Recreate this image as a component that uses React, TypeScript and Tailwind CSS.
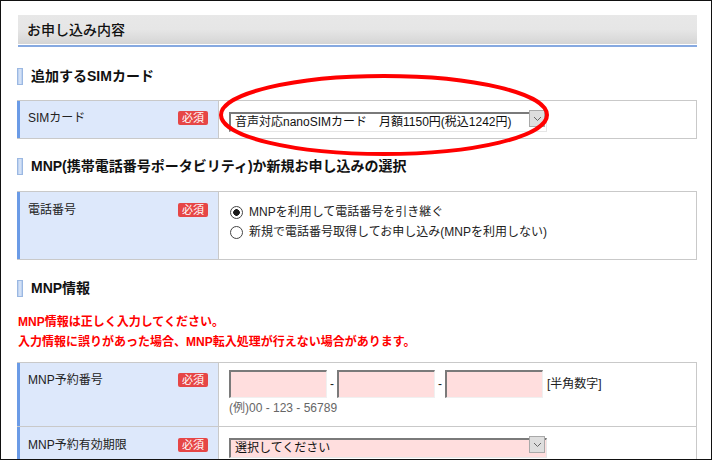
import React from "react";

const font = "font-['Liberation_Sans','Noto_Sans_CJK_JP',sans-serif]";

function Badge() {
    return (
        <span className="w-[30px] h-[14px] rounded-[2px] bg-[#e64646] text-white text-[11px] leading-[14px] text-center">
            必須
        </span>
    );
}

function SectionHeading({ children }: { children: React.ReactNode }) {
    return (
        <div className="flex items-center gap-2 h-[17px]">
            <span className="w-[6px] h-[17px] border border-[#9bb8e2] bg-linear-to-r from-[#b4cbee] via-[#dde8f8] to-[#b4cbee]" />
            <span className="text-[14px] leading-[17px] font-bold text-[#111]">{children}</span>
        </div>
    );
}

function Label({ text, pt }: { text: string; pt: string }) {
    return (
        <div className={`w-[202px] shrink-0 border-l-[3px] border-l-[#6b9be6] border-r border-r-[#c9c9c9] bg-[#dde8fb] pl-[8px] pr-[10px] ${pt}`}>
            <div className="flex h-[20px] items-center justify-between">
                <span className="text-[12px] text-[#222]">{text}</span>
                <Badge />
            </div>
        </div>
    );
}

function FakeSelect({ value, pink }: { value: string; pink?: boolean }) {
    return (
        <div className="relative w-[318px] h-[20px]">
            <select
                defaultValue={value}
                className={`appearance-none w-full h-full border-t-2 border-l-2 border-t-[#7a7a7a] border-l-[#7a7a7a] border-r border-b border-r-[#e6e6e6] border-b-[#e6e6e6] pl-[4px] text-[12px] leading-[16px] text-[#111] outline-none ${pink ? "bg-[#ffdede]" : "bg-white"}`}
            >
                <option>{value}</option>
            </select>
            <span className="absolute right-[2px] top-[1px] flex h-[17px] w-[16px] items-center justify-center border border-[#a9a9a9] bg-[#dedede]">
                <svg width="9" height="6" viewBox="0 0 9 6">
                    <polyline points="1,1 4.5,4.5 8,1" fill="none" stroke="#666" strokeWidth="1" />
                </svg>
            </span>
        </div>
    );
}

function TextBox() {
    return (
        <input
            type="text"
            className="w-[98px] h-[28px] bg-[#ffdede] border-t-2 border-l-2 border-t-[#7a7a7a] border-l-[#7a7a7a] border-r border-b border-r-[#f0f0f0] border-b-[#f0f0f0] outline-none"
        />
    );
}

function Radio({ label, checked }: { label: string; checked?: boolean }) {
    return (
        <label className="flex h-[20px] items-center gap-[6px]">
            <input
                type="radio"
                name="tel"
                defaultChecked={checked}
                className="appearance-none ml-px w-[13px] h-[13px] rounded-full border border-[#444] bg-white checked:bg-[radial-gradient(circle,#1a1a1a_0_3px,#ffffff_3.6px)]"
            />
            <span className="text-[12px] text-[#222]">{label}</span>
        </label>
    );
}

export default function App() {
    return (
        <div className={`relative w-[712px] h-[460px] overflow-hidden border border-[#111] bg-white pl-4 pr-[14px] pt-[14px] ${font}`}>
            {/* page title bar */}
            <div className="ml-px border-b-2 border-[#86a9e1]">
                <div className="flex h-[30px] items-center border-b border-white bg-linear-to-b from-[#e8e8e8] via-[#e6e6e6] to-[#d5d5d5] pl-[9px] pt-[2px]">
                    <span className="text-[14px] font-medium text-[#111]">お申し込み内容</span>
                </div>
            </div>

            <div className="mt-[21px]">
                <SectionHeading>追加するSIMカード</SectionHeading>
            </div>

            <div className="mt-[15px] border-t border-r border-[#c9c9c9]">
                <div className="flex border-b border-[#c9c9c9]">
                    <Label text="SIMカード" pt="pt-[7px]" />
                    <div className="flex-1 pl-[10px] pt-[8px] pb-[9px]">
                        <FakeSelect value="音声対応nanoSIMカード　月額1150円(税込1242円)" />
                    </div>
                </div>
            </div>

            <div className="mt-[19px]">
                <SectionHeading>MNP(携帯電話番号ポータビリティ)か新規お申し込みの選択</SectionHeading>
            </div>

            <div className="mt-[16px] border-t border-r border-[#c9c9c9]">
                <div className="flex border-b border-[#c9c9c9]">
                    <Label text="電話番号" pt="pt-[8px]" />
                    <div className="flex-1 pl-[10px] pt-[10px] pb-[17px]">
                        <Radio label="MNPを利用して電話番号を引き継ぐ" checked />
                        <Radio label="新規で電話番号取得してお申し込み(MNPを利用しない)" />
                    </div>
                </div>
            </div>

            <div className="mt-[20px]">
                <SectionHeading>MNP情報</SectionHeading>
            </div>

            <div className="mt-[15px] ml-px text-[12px] leading-[20px] font-bold text-[#ff0000]">
                <p>MNP情報は正しく入力してください。</p>
                <p>入力情報に誤りがあった場合、MNP転入処理が行えない場合があります。</p>
            </div>

            <div className="mt-[10px] border-t border-r border-[#c9c9c9]">
                <div className="flex border-b border-[#c9c9c9]">
                    <Label text="MNP予約番号" pt="pt-[7px]" />
                    <div className="flex-1 pl-[10px] pt-[7px] pb-[10px]">
                        <div className="flex items-center">
                            <TextBox />
                            <span className="w-[10px] text-center text-[12px] text-[#222]">-</span>
                            <TextBox />
                            <span className="w-[10px] text-center text-[12px] text-[#222]">-</span>
                            <TextBox />
                            <span className="ml-[4px] text-[12px] text-[#222]">[半角数字]</span>
                        </div>
                        <p className="mt-[2px] text-[12px] leading-[16px] text-[#666]">(例)00 - 123 - 56789</p>
                    </div>
                </div>
                <div className="flex border-b border-[#c9c9c9]">
                    <Label text="MNP予約有効期限" pt="pt-[8px]" />
                    <div className="flex-1 pl-[10px] pt-[8px] pb-[10px]">
                        <FakeSelect value="選択してください" pink />
                    </div>
                </div>
            </div>

            {/* red hand-drawn highlight */}
            <svg className="pointer-events-none absolute left-0 top-0" width="712" height="460">
                <ellipse cx="383" cy="114" rx="163" ry="39" fill="none" stroke="#ff0000" strokeWidth="4" />
            </svg>
        </div>
    );
}
